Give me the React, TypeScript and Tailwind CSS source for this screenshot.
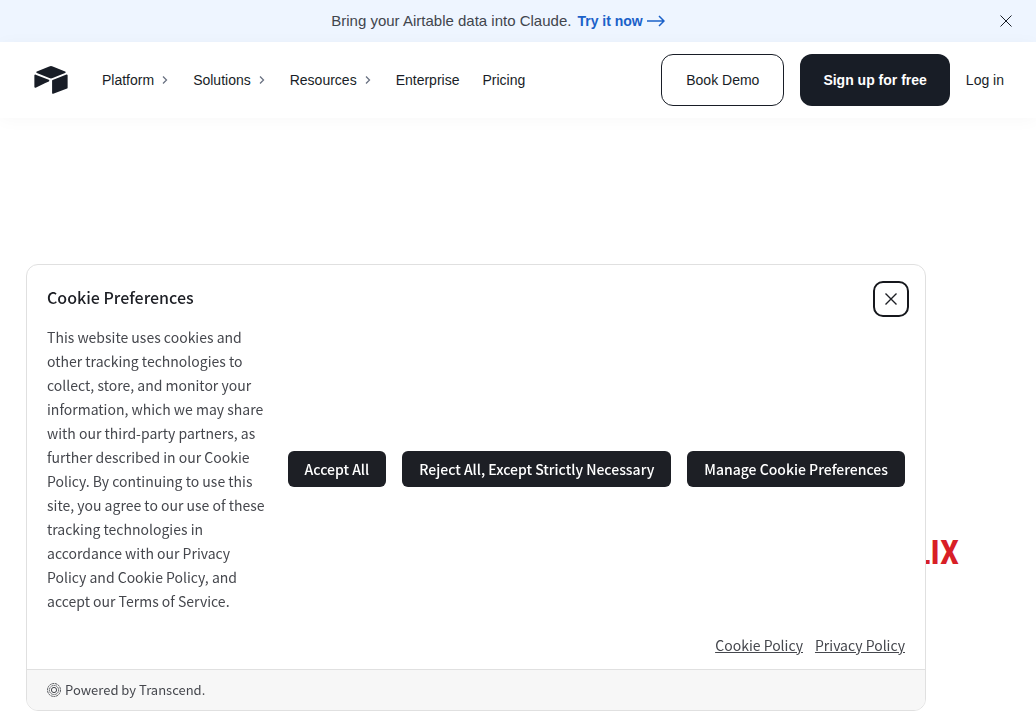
import { useState } from "react";

const menuItems = ["Platform", "Solutions", "Resources"];
const linkItems = ["Enterprise", "Pricing"];

function AirtableLogo() {
  return (
    <svg viewBox="11 10 177 149" className="h-7 w-[34px]" fill="currentColor" aria-hidden="true">
      <path d="M90.039 12.368 24.079 39.66c-3.668 1.518-3.63 6.728.062 8.191l66.236 26.266a24.58 24.58 0 0 0 18.12 0l66.236-26.266c3.69-1.463 3.73-6.673.061-8.191l-65.959-27.293a24.58 24.58 0 0 0-18.796 0" />
      <path d="M105.312 88.46v65.617c0 3.12 3.147 5.258 6.048 4.108l73.808-28.648a4.42 4.42 0 0 0 2.79-4.108V59.813c0-3.121-3.148-5.258-6.049-4.108l-73.808 28.648a4.42 4.42 0 0 0-2.789 4.108" />
      <path d="m88.078 91.846-21.904 10.576-2.224 1.075-46.236 22.154c-2.931 1.414-6.672-.722-6.672-3.977V60.088c0-1.178.604-2.195 1.414-2.96.338-.34.721-.619 1.12-.84 1.104-.663 2.68-.84 4.02-.31l70.114 27.782c3.564 1.414 3.844 6.408.368 8.087" />
    </svg>
  );
}

function CloseIcon({ strokeWidth = 1 }: { strokeWidth?: number }) {
  return (
    <svg viewBox="0 0 12 12" className="size-3" fill="none" stroke="currentColor" strokeWidth={strokeWidth} aria-hidden="true">
      <path d="M0.5 0.5 11.5 11.5M11.5 0.5 0.5 11.5" />
    </svg>
  );
}

function ChevronIcon() {
  return (
    <svg viewBox="0 0 6 8" className="h-2 w-1.5 text-gray-500" fill="none" stroke="currentColor" strokeWidth="1.3" aria-hidden="true">
      <path d="M1 0.5 4.5 4 1 7.5" />
    </svg>
  );
}

function TranscendIcon() {
  return (
    <svg viewBox="0 0 14 14" className="size-3.5" fill="none" stroke="currentColor" aria-hidden="true">
      <circle cx="7" cy="7" r="6.5" strokeWidth="0.9" strokeDasharray="2.2 0.6" />
      <circle cx="7" cy="7" r="4.6" strokeWidth="0.9" strokeDasharray="1.6 0.5" />
      <circle cx="7" cy="7" r="2.6" strokeWidth="1" />
    </svg>
  );
}

function CookieDialog({ onClose }: { onClose: () => void }) {
  const buttonClass =
    "h-9 shrink-0 rounded-md bg-[#1d1f25] px-[17px] text-sm leading-6 font-medium whitespace-nowrap text-white";

  return (
    <section
      role="dialog"
      aria-labelledby="cookie-title"
      className="fixed bottom-4 left-[26px] w-[900px] max-w-[calc(100%-52px)] overflow-hidden rounded-xl border border-[#e0e0e0] bg-white font-['Noto_Sans_CJK_SC',sans-serif] text-[#45474d]"
    >
      <div className="px-5 pt-4 pb-3">
        <div className="flex items-start justify-between">
          <h2 id="cookie-title" className="mt-1 text-base leading-6 font-medium text-[#1d1f25]">
            Cookie Preferences
          </h2>
          <button
            type="button"
            onClick={onClose}
            aria-label="Close"
            className="-mr-1 flex size-9 items-center justify-center rounded-[10px] border-2 border-[#16181d] text-[#1d1f25]"
          >
            <CloseIcon strokeWidth={1.4} />
          </button>
        </div>

        <div className="mt-2 flex items-center">
          <p className="flex-1 pr-5 text-sm leading-6">
            This website uses cookies and other tracking technologies to collect, store, and monitor your
            information, which we may share with our third-party partners, as further described in our Cookie
            Policy. By continuing to use this site, you agree to our use of these tracking technologies in
            accordance with our Privacy Policy and Cookie Policy, and accept our Terms of Service.
          </p>
          <div className="flex gap-4">
            <button type="button" onClick={onClose} className={buttonClass}>
              Accept All
            </button>
            <button type="button" onClick={onClose} className={buttonClass}>
              Reject All, Except Strictly Necessary
            </button>
            <button type="button" className={buttonClass}>
              Manage Cookie Preferences
            </button>
          </div>
        </div>

        <div className="mt-5 flex justify-end gap-3 text-sm leading-6 underline">
          <a href="#cookie-policy">Cookie Policy</a>
          <a href="#privacy-policy">Privacy Policy</a>
        </div>
      </div>

      <div className="flex items-center gap-1 border-t border-[#e0e0e0] bg-[#f7f7f7] px-5 py-2.5 text-[13px] leading-5">
        <TranscendIcon />
        <span>Powered by Transcend.</span>
      </div>
    </section>
  );
}

export default function App() {
  const [showBanner, setShowBanner] = useState(true);
  const [showCookies, setShowCookies] = useState(true);

  return (
    <div className="min-h-screen bg-white font-['Liberation_Sans',sans-serif] text-[#181d26]">
      {showBanner ? (
        <div className="flex h-[42px] items-center bg-[#eef5ff] pr-6">
          <p className="flex flex-1 items-center justify-center gap-1.5 pr-1 text-[15px] leading-5 text-[#41454d]">
            Bring your Airtable data into Claude.
            <a href="#claude" className="flex items-center gap-1 text-sm font-bold text-[#1b61c9]">
              Try it now
              <svg viewBox="0 0 18 12" className="h-3 w-[18px]" fill="none" stroke="currentColor" strokeWidth="1.5" aria-hidden="true">
                <path d="M0 6h17M12 1l5 5-5 5" />
              </svg>
            </a>
          </p>
          <button type="button" onClick={() => setShowBanner(false)} aria-label="Dismiss">
            <CloseIcon />
          </button>
        </div>
      ) : null}

      <header className="flex h-[76px] items-center bg-white pr-8 pl-[34px] text-sm shadow-[0_2px_16px_rgba(0,0,0,0.03)]">
        <a href="#home" aria-label="Airtable">
          <AirtableLogo />
        </a>
        <nav className="ml-[34px] flex items-center gap-[23px]">
          {menuItems.map((item) => (
            <button key={item} type="button" className="flex items-center gap-2 pr-[2px]">
              {item}
              <ChevronIcon />
            </button>
          ))}
          {linkItems.map((item) => (
            <a key={item} href={`#${item.toLowerCase()}`}>
              {item}
            </a>
          ))}
        </nav>
        <div className="ml-auto flex items-center gap-4">
          <a href="#demo" className="rounded-xl border border-[#181d26] px-6 py-[15px]">
            Book Demo
          </a>
          <a href="#signup" className="rounded-xl bg-[#181d26] px-[23px] py-4 font-bold text-white">
            Sign up for free
          </a>
          <a href="#login">Log in</a>
        </div>
      </header>

      <main className="flex justify-end pt-[412px] pr-[77px]">
        <p className="font-['Roboto_Condensed',sans-serif] text-[34px] leading-11 font-bold text-[#d81f26]">
          NETFLIX
        </p>
      </main>

      {showCookies ? <CookieDialog onClose={() => setShowCookies(false)} /> : null}
    </div>
  );
}
